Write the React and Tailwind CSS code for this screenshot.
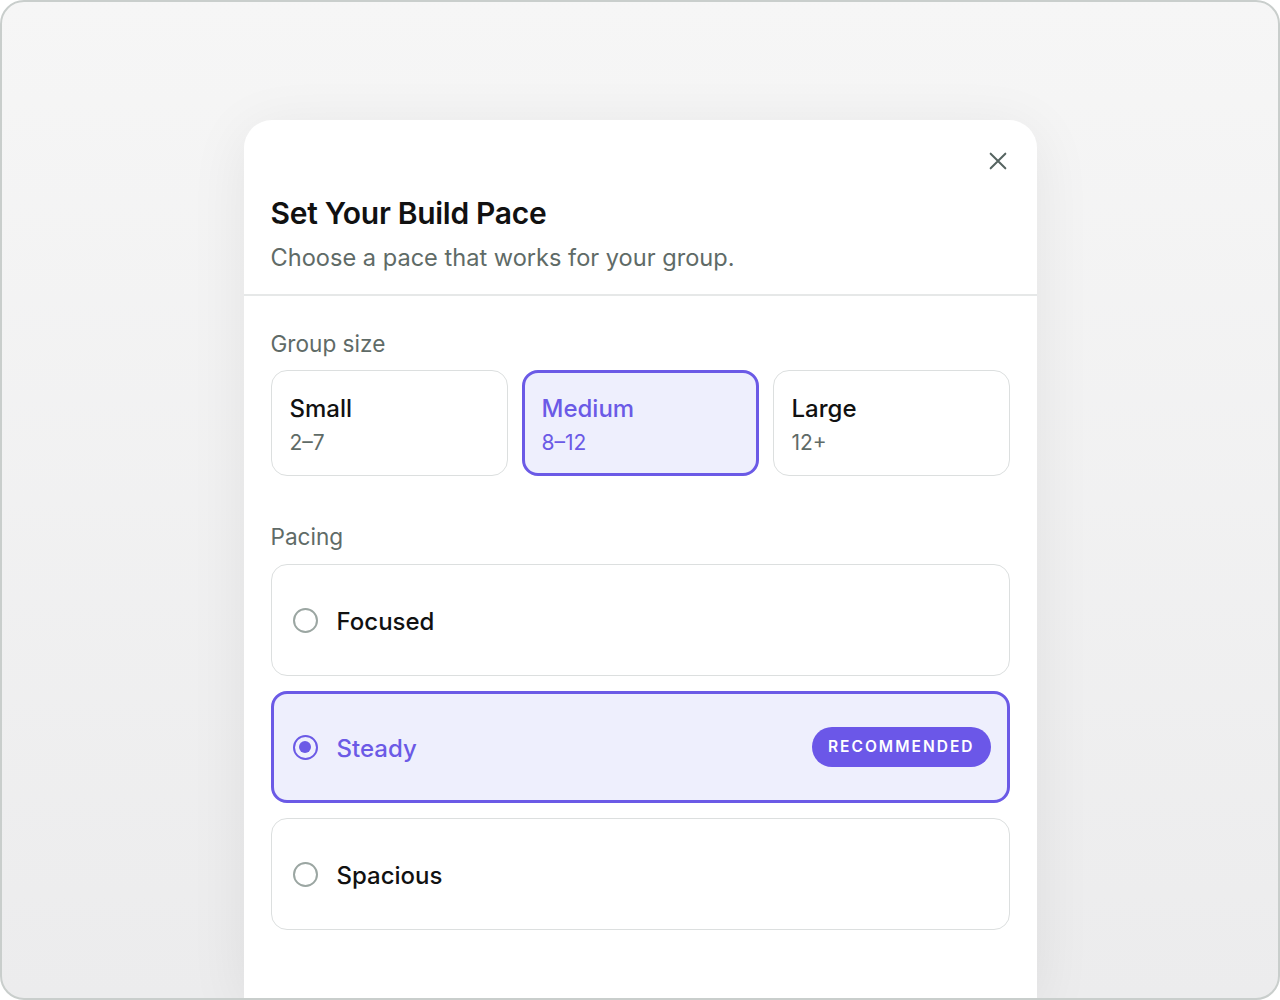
import { useState } from "react";

const sizes = [
  { id: "small", label: "Small", range: "2–7" },
  { id: "medium", label: "Medium", range: "8–12" },
  { id: "large", label: "Large", range: "12+" },
];

const paces = [
  { id: "focused", label: "Focused" },
  { id: "steady", label: "Steady", badge: "Recommended" },
  { id: "spacious", label: "Spacious" },
];

const Radio = ({ checked }) =>
  checked ? (
    <span className="flex h-[25px] w-[25px] items-center justify-center rounded-full border-[2.5px] border-[#6b5ae6]">
      <span className="h-[12px] w-[12px] rounded-full bg-[#6b5ae6]" />
    </span>
  ) : (
    <span className="h-[25px] w-[25px] rounded-full border-2 border-[#9ba6a2]" />
  );

export default function App() {
  const [size, setSize] = useState("medium");
  const [pace, setPace] = useState("steady");

  return (
    <div
      className="flex h-[1000px] w-[1280px] justify-center overflow-hidden rounded-[24px] border-2 border-[#c9cecc] bg-gradient-to-b from-[#f6f6f6] to-[#ececed] pt-[118px]"
      style={{ fontFamily: "Inter, 'Noto Sans', sans-serif" }}
    >
      <div className="relative w-[793px] rounded-t-[28px] bg-white shadow-[0_10px_60px_rgba(0,0,0,0.07)]">
        <button className="absolute right-[28px] top-[30px] text-[#566461]">
          <svg width="22" height="22" viewBox="0 0 24 24" fill="none" stroke="currentColor" strokeWidth="2.2" strokeLinecap="round">
            <path d="M4 4l16 16M20 4L4 20" />
          </svg>
        </button>

        <div className="border-b-2 border-[#e6e8e8] px-[27px] pb-[20px] pt-[75px]">
          <h2 className="text-[30px] font-semibold leading-[36px] tracking-[-0.01em] text-[#111]">Set Your Build Pace</h2>
          <p className="mt-[11px] text-[23.6px] leading-[32px] text-[#5f6b67]">Choose a pace that works for your group.</p>
        </div>

        <div className="px-[27px] pt-[33px]">
          <div className="text-[22.6px] leading-[30px] text-[#5f6b67]">Group size</div>
          <div className="mt-[11px] grid grid-cols-3 gap-[14px]">
            {sizes.map((s) => {
              const active = size === s.id;
              return (
                <button
                  key={s.id}
                  onClick={() => setSize(s.id)}
                  className={`flex h-[106px] flex-col justify-center rounded-[16px] pt-[4px] text-left ${
                    active ? "border-[3px] border-[#6b5ae6] bg-[#eeeffd] px-[17px]" : "border-[1.5px] border-[#dcdfdf] bg-white px-[18px]"
                  }`}
                >
                  <span className={`text-[24px] font-medium leading-[32px] ${active ? "text-[#6b5ae6]" : "text-[#111]"}`}>{s.label}</span>
                  <span className={`mt-[4px] text-[21px] leading-[28px] ${active ? "text-[#6b5ae6]" : "text-[#5f6b67]"}`}>{s.range}</span>
                </button>
              );
            })}
          </div>

          <div className="mt-[46px] text-[22.6px] leading-[30px] text-[#5f6b67]">Pacing</div>
          <div className="mt-[12px] flex flex-col gap-[15px]">
            {paces.map((p) => {
              const active = pace === p.id;
              return (
                <button
                  key={p.id}
                  onClick={() => setPace(p.id)}
                  className={`flex h-[112px] items-center rounded-[16px] text-left ${
                    active ? "border-[3px] border-[#6b5ae6] bg-[#eeeffd] pl-[19px] pr-[16px]" : "border-[1.5px] border-[#dcdfdf] bg-white pl-[21px] pr-[18px]"
                  }`}
                >
                  <Radio checked={active} />
                  <span className={`ml-[19px] flex-1 pt-[3px] text-[24px] font-medium leading-[32px] ${active ? "text-[#6b5ae6]" : "text-[#111]"}`}>{p.label}</span>
                  {p.badge && (
                    <span className="flex h-[40px] items-center rounded-full bg-[#6b57e8] px-[16px] text-[15.5px] font-semibold uppercase tracking-[0.13em] text-white">
                      {p.badge}
                    </span>
                  )}
                </button>
              );
            })}
          </div>
        </div>
      </div>
    </div>
  );
}
